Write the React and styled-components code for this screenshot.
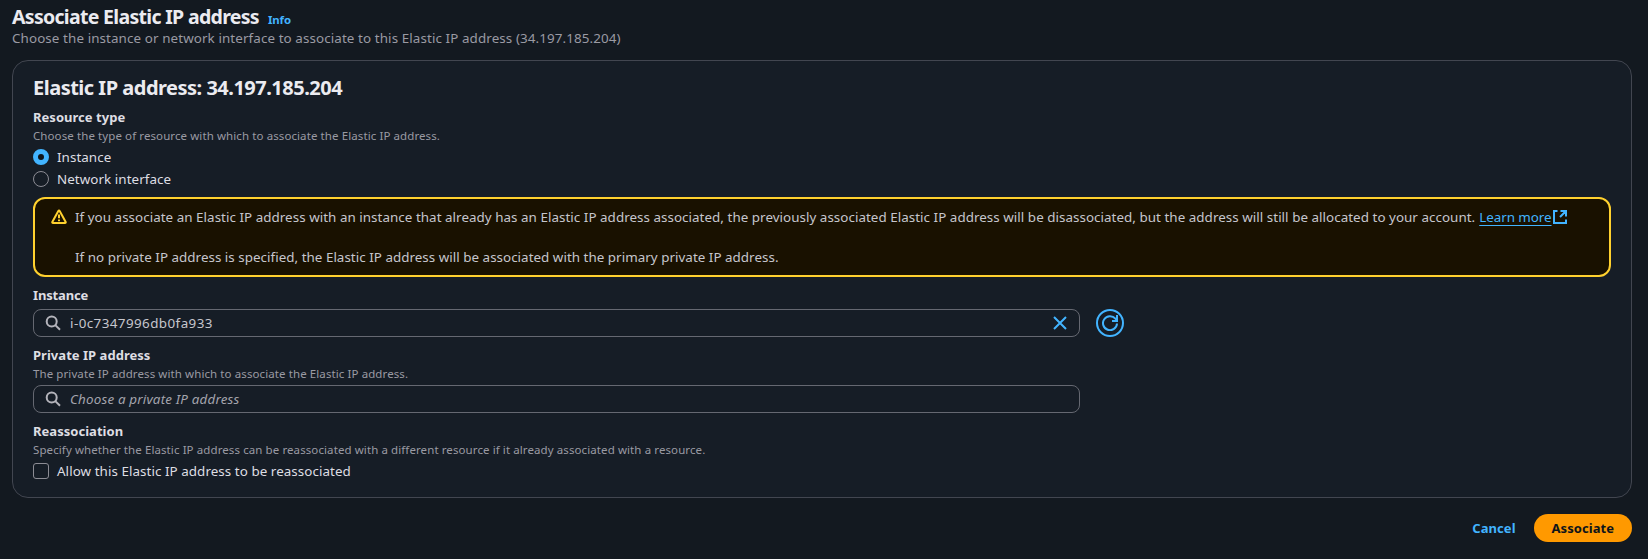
import React, { useState } from 'react';
import styled, { createGlobalStyle } from 'styled-components';

const GlobalStyle = createGlobalStyle`
  *, *::before, *::after { box-sizing: border-box; }
  body {
    margin: 0;
    background: #131920;
    color: #c6c6cd;
    font: 400 13.4px/20px "Noto Sans", "Open Sans", sans-serif;
    letter-spacing: 0.06px;
  }
`;

const Page = styled.main`
  display: flex;
  flex-direction: column;
  height: 559px;
  padding: 5px 16px 0 12px;
  overflow: hidden;
  white-space: nowrap;
`;

const TitleRow = styled.div`
  display: flex;
  align-items: baseline;
  gap: 9px;
  height: 23px;
`;

const Title = styled.h1`
  margin: 0;
  color: #ebebf0;
  font: 700 19.5px/24px "Noto Sans", "Open Sans", sans-serif;
  letter-spacing: -0.69px;
`;

const InfoLink = styled.a`
  color: #42b4ff;
  font-size: 11.4px;
  font-weight: 700;
  line-height: 16px;
  letter-spacing: -0.1px;
`;

const Subtitle = styled.p`
  margin: 0 0 12px;
  color: #9a9aa3;
  letter-spacing: 0.1px;
`;

const Card = styled.section`
  display: flex;
  flex-direction: column;
  gap: 8px;
  height: 438px;
  padding: 15px 20px 16px;
  background: #161d26;
  border: 1px solid #424650;
  border-radius: 16px;
`;

const CardTitle = styled.h2`
  margin: 0 0 -1px;
  color: #ebebf0;
  font: 700 20px/24px "Noto Sans", "Open Sans", sans-serif;
  letter-spacing: -0.5px;
`;

const Field = styled.div`
  display: flex;
  flex-direction: column;
  gap: 4px;
`;

const Label = styled.div`
  color: #dedee3;
  font-size: 13px;
  font-weight: 700;
  letter-spacing: ${(p) => p.$tracking ?? '0.03px'};
`;

const Hint = styled.div`
  padding-top: 1px;
  height: 16px;
  color: #9a9aa3;
  font-size: 11.5px;
  line-height: 16px;
  letter-spacing: 0.095px;
`;

const Options = styled.div`
  display: flex;
  flex-direction: column;
  gap: 2px;
`;

const Option = styled.label`
  display: flex;
  align-items: center;
  gap: 8px;
  height: 20px;
  color: #dedee3;
`;

const Radio = styled.input.attrs({ type: 'radio' })`
  appearance: none;
  width: 16px;
  height: 16px;
  margin: 0;
  border: 1px solid #8c8c94;
  border-radius: 50%;
  &:checked {
    border: 5px solid #42b4ff;
    background: #0f141a;
  }
`;

const Checkbox = styled.input.attrs({ type: 'checkbox' })`
  appearance: none;
  width: 16px;
  height: 16px;
  margin: 0;
  border: 1px solid #8c8c94;
  border-radius: 3px;
  &:checked { background: #42b4ff; }
`;

const Warning = styled.div`
  display: flex;
  gap: 8px;
  height: 80px;
  padding: 8px 16px;
  background: #191100;
  border: 2px solid #ffd12e;
  border-radius: 12px;
`;

const WarningIcon = styled.svg`
  flex: none;
  width: 16px;
  height: 16px;
  margin-top: 2px;
`;

const WarningText = styled.div`
  display: flex;
  flex-direction: column;
  gap: 20px;
`;

const WarningLine = styled.p`
  margin: 0;
  display: flex;
  letter-spacing: ${(p) => p.$tracking ?? '0.041px'};
`;

const LearnMore = styled.a`
  display: flex;
  margin-left: 4px;
  color: #42b4ff;
  letter-spacing: -0.05px;
`;

const LinkText = styled.span`
  text-decoration: underline;
  text-decoration-thickness: 1px;
  text-underline-offset: 3px;
`;

const ExternalIcon = styled.svg`
  width: 14px;
  height: 14px;
  margin: 3px 0 0 1px;
`;

const ControlRow = styled.div`
  display: flex;
  gap: 16px;
`;

const SearchBox = styled.div`
  display: flex;
  align-items: center;
  width: 1047px;
  height: 28px;
  padding: 0 11px;
  border: 1px solid #656871;
  border-radius: 8px;
`;

const Icon = styled.svg`
  flex: none;
  width: 16px;
  height: 16px;
  fill: none;
  stroke: ${(p) => p.$color ?? '#b4b4bb'};
  stroke-width: 2;
`;

const SearchInput = styled.input`
  flex: 1;
  min-width: 0;
  margin: 0 0 0 9px;
  padding: 0;
  border: 0;
  outline: 0;
  background: none;
  color: #c6c6cd;
  font: inherit;
  letter-spacing: 0.43px;
  &::placeholder {
    color: #a4a4ad;
    opacity: 1;
    font-style: italic;
    letter-spacing: 0.18px;
  }
`;

const IconButton = styled.button`
  display: flex;
  align-items: center;
  justify-content: center;
  width: ${(p) => (p.$round ? '28px' : '16px')};
  height: ${(p) => (p.$round ? '28px' : '16px')};
  padding: 0;
  background: none;
  border: ${(p) => (p.$round ? '2px solid #42b4ff' : '0')};
  border-radius: 50%;
`;

const Actions = styled.footer`
  display: flex;
  justify-content: flex-end;
  margin-top: 16px;
`;

const Button = styled.button`
  height: 28px;
  padding: 0 18px;
  border: 0;
  border-radius: 14px;
  background: ${(p) => (p.$primary ? '#ff9900' : 'transparent')};
  color: ${(p) => (p.$primary ? '#0f141a' : '#42b4ff')};
  font: 700 13px/20px "Noto Sans", "Open Sans", sans-serif;
  letter-spacing: 0.05px;
`;

const SearchIcon = () => (
  <Icon viewBox="0 0 16 16">
    <circle cx="6.7" cy="6.5" r="5" />
    <path d="m10.3 10.1 4.7 4.7" />
  </Icon>
);

export default function App() {
  const [resource, setResource] = useState('instance');
  const [instance, setInstance] = useState('i-0c7347996db0fa933');
  return (
    <Page>
      <GlobalStyle />
      <TitleRow>
        <Title>Associate Elastic IP address</Title>
        <InfoLink>Info</InfoLink>
      </TitleRow>
      <Subtitle>
        Choose the instance or network interface to associate to this Elastic IP address (34.197.185.204)
      </Subtitle>
      <Card>
        <CardTitle>Elastic IP address: 34.197.185.204</CardTitle>
        <Field>
          <div>
            <Label>Resource type</Label>
            <Hint>Choose the type of resource with which to associate the Elastic IP address.</Hint>
          </div>
          <Options>
            <Option>
              <Radio name="resource" checked={resource === 'instance'} onChange={() => setResource('instance')} />
              Instance
            </Option>
            <Option>
              <Radio name="resource" checked={resource === 'network'} onChange={() => setResource('network')} />
              Network interface
            </Option>
          </Options>
        </Field>
        <Warning>
          <WarningIcon viewBox="0 0 16 16" fill="none" stroke="#ffd12e" strokeWidth="2">
            <path d="M7.2 2.2Q8 .8 8.8 2.2L14.7 13Q15 14 14 14H2Q1 14 1.3 13z" strokeLinejoin="round" />
            <path d="M8 5.5v3.7M8 10.4v1.8" />
          </WarningIcon>
          <WarningText>
            <WarningLine>
              If you associate an Elastic IP address with an instance that already has an Elastic IP address
              associated, the previously associated Elastic IP address will be disassociated, but the address
              will still be allocated to your account.
              <LearnMore>
                <LinkText>Learn more</LinkText>
                <ExternalIcon viewBox="0 0 14 14" fill="none" stroke="#42b4ff" strokeWidth="2">
                  <path d="M4.5 1H1v12h12V9.5M7.5 1H13v5.5M13 1 7 7" />
                </ExternalIcon>
              </LearnMore>
            </WarningLine>
            <WarningLine $tracking="0.03px">
              If no private IP address is specified, the Elastic IP address will be associated with the primary
              private IP address.
            </WarningLine>
          </WarningText>
        </Warning>
        <Field>
          <Label $tracking="-0.15px">Instance</Label>
          <ControlRow>
            <SearchBox>
              <SearchIcon />
              <SearchInput value={instance} onChange={(e) => setInstance(e.target.value)} />
              <IconButton onClick={() => setInstance('')}>
                <Icon viewBox="0 0 16 16" $color="#42b4ff">
                  <path d="m2 2 12 12M14 2 2 14" />
                </Icon>
              </IconButton>
            </SearchBox>
            <IconButton $round>
              <Icon viewBox="0 0 16 16" $color="#42b4ff">
                <path d="M15 8.5A7 7 0 1 1 13.4 3.7L15 5.6" />
                <path d="M10 6h5V0" />
              </Icon>
            </IconButton>
          </ControlRow>
        </Field>
        <Field>
          <div>
            <Label>Private IP address</Label>
            <Hint>The private IP address with which to associate the Elastic IP address.</Hint>
          </div>
          <SearchBox>
            <SearchIcon />
            <SearchInput placeholder="Choose a private IP address" />
          </SearchBox>
        </Field>
        <Field>
          <div>
            <Label>Reassociation</Label>
            <Hint>
              Specify whether the Elastic IP address can be reassociated with a different resource if it already
              associated with a resource.
            </Hint>
          </div>
          <Option>
            <Checkbox />
            Allow this Elastic IP address to be reassociated
          </Option>
        </Field>
      </Card>
      <Actions>
        <Button>Cancel</Button>
        <Button $primary>Associate</Button>
      </Actions>
    </Page>
  );
}
